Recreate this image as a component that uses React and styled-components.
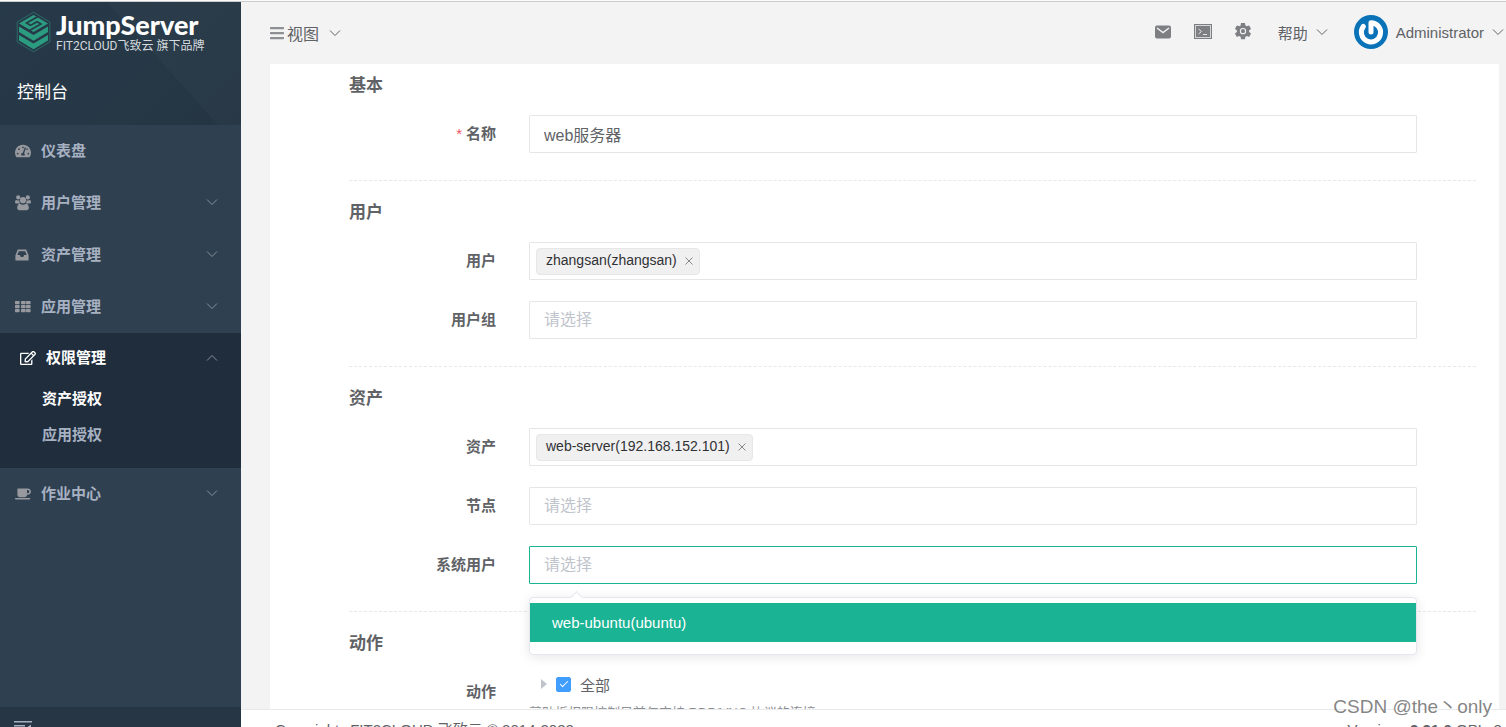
import React, { useState } from 'react';
import styled, { createGlobalStyle, ThemeProvider } from 'styled-components';
import { FaTachometerAlt, FaRegEdit, FaCoffee, FaBars } from 'react-icons/fa';

const theme = {
  colors: {
    green: '#1ab394',
    blue: '#409eff',
    text: '#606266',
    text_dark: '#303133',
    placeholder: '#c0c4cc',
    border: '#e5e6e7',
    menu: '#a7b1c2',
    sidebar: '#2f4050',
    sidebar_dark: '#1f2d3d',
    page: '#f3f3f4',
  },
};

const GlobalStyle = createGlobalStyle`
  *, *::before, *::after {
    box-sizing: border-box;
  }

  body {
    background: ${theme.colors.page};
    color: ${theme.colors.text};
    font-family: 'Liberation Sans', 'Noto Sans CJK SC', sans-serif;
    font-size: 15px;
    margin: 0;
  }

  button,
  input {
    font-family: inherit;
  }

  button {
    background: none;
    border: 0;
    color: inherit;
    cursor: pointer;
    padding: 0;
  }

  a {
    color: inherit;
    text-decoration: none;
  }
`;

const Page = styled.div`
  border-top: 1px solid #fbfbfb;
  display: flex;
  height: 100vh;
  overflow: hidden;
  position: relative;
`;

/* Sidebar */

const Sidebar = styled.aside`
  background: ${props => props.theme.colors.sidebar};
  border-top: 1px solid #c9cbcd;
  display: flex;
  flex: 0 0 241px;
  flex-direction: column;
`;

const SidebarHeader = styled.div`
  background: linear-gradient(48deg, transparent 62%, rgba(255, 255, 255, 0.02) 62%),
    linear-gradient(135deg, #273a49 0%, #263746 60%, #243443 100%);
  height: 123px;
`;

const Brand = styled.a`
  align-items: flex-start;
  color: #fff;
  display: flex;
  gap: 5px;
  padding: 9px 0 0 16px;
`;

const BrandText = styled.span`
  display: flex;
  flex-direction: column;

  strong {
    font-family: Lato, 'Open Sans', sans-serif;
    font-size: 27px;
    font-weight: 900;
    line-height: 28px;
  }

  span {
    color: #d5dade;
    font-family: Roboto, 'Noto Sans CJK SC', sans-serif;
    font-size: 12px;
    line-height: 14px;
    white-space: pre;
  }
`;

const ViewTitle = styled.h1`
  color: #fff;
  font-size: 17px;
  font-weight: 400;
  line-height: 24px;
  margin: 28px 0 0 17px;
`;

const Menu = styled.nav`
  flex: 1;
`;

const MenuItem = styled.button`
  align-items: center;
  color: ${props => (props.$active ? '#fff' : props.theme.colors.menu)};
  display: flex;
  font-size: 15px;
  font-weight: 600;
  gap: 10px;
  height: ${props => (props.$active ? 48 : 52)}px;
  padding: 0 23px ${props => (props.$active ? 1 : 4)}px ${props => (props.$active ? 20 : 15)}px;
  width: 100%;

  > svg:first-child {
    color: ${props => (props.$active ? '#fff' : '#97999e')};
    margin-top: 3px;
  }

  > svg:last-child {
    color: #87919b;
    margin-top: 2px;
  }

  span {
    flex: 1;
    text-align: left;
  }
`;

const MenuGroup = styled.div`
  background: ${props => props.theme.colors.sidebar_dark};
  padding-bottom: 15px;
`;

const SubItem = styled.a`
  color: ${props => (props.$active ? '#fff' : props.theme.colors.menu)};
  display: block;
  font-weight: 600;
  line-height: 36px;
  padding-left: 42px;
`;

const SidebarFooter = styled.div`
  background: #263645;
  flex: 0 0 20px;
  overflow: hidden;
  padding: 13px 14px 0;

  svg {
    display: block;
  }
`;

/* Main column */

const Main = styled.div`
  border-top: 1px solid #c9cbcd;
  display: flex;
  flex: 1;
  flex-direction: column;
  min-width: 0;
`;

const TopBar = styled.header`
  align-items: center;
  display: flex;
  flex: 0 0 62px;
  justify-content: space-between;
  padding: 0 2px 0 28px;
`;

const ViewButton = styled.button`
  align-items: center;
  display: flex;
  font-size: 16px;
  gap: 2px;

  span {
    margin-right: 8px;
  }
`;

const Tools = styled.div`
  align-items: center;
  color: #7d7f82;
  display: flex;
  gap: 22px;
  padding-bottom: 2px;

  svg {
    display: block;
  }
`;

const TextButton = styled.button`
  align-items: center;
  color: ${props => props.theme.colors.text};
  display: flex;
  font-size: 15px;
  gap: 8px;
  margin-left: 4px;
`;

const Content = styled.main`
  flex: 1;
  min-height: 0;
  overflow: hidden;
  padding: 0 7px 0 29px;
`;

const Card = styled.form`
  background: #fff;
  padding: 0 23px 40px 79px;
`;

const Section = styled.section`
  border-bottom: 1px dashed #e7e8ea;
  padding: ${props => (props.$first ? 9 : 19)}px 0 27px;

  &:last-child {
    border-bottom: 0;
  }

  h2 {
    color: ${props => props.theme.colors.text};
    font-size: 17px;
    font-weight: 700;
    line-height: 26px;
    margin: 0 0 16px;
  }
`;

const FormRow = styled.div`
  display: grid;
  grid-template-columns: 180px 1fr;
  margin-right: 59px;

  & + & {
    margin-top: 21px;
  }
`;

const Label = styled.label`
  font-size: 15px;
  font-weight: 700;
  line-height: 38px;
  padding-right: 33px;
  text-align: right;
`;

const Required = styled.span`
  color: #ed5565;
  font-weight: 400;
  margin-right: 4px;
`;

const Field = styled.div`
  align-items: center;
  background: #fff;
  border: 1px solid ${props => (props.$open ? props.theme.colors.green : props.theme.colors.border)};
  border-radius: 1px;
  display: flex;
  height: 38px;
  min-width: 0;
  padding-left: ${props => (props.$tagged ? 6 : 14)}px;
  position: relative;

  > input {
    background: none;
    border: 0;
    color: ${props => props.theme.colors.text};
    flex: 1;
    font-size: 16px;
    min-width: 0;
    outline: 0;
    padding: 0;
  }

  > input::placeholder {
    color: ${props => props.theme.colors.placeholder};
  }
`;

const Tag = styled.span`
  align-items: center;
  background: #f0f0f1;
  border: 1px solid #e6e7e8;
  border-radius: 4px;
  color: ${props => props.theme.colors.text_dark};
  display: inline-flex;
  font-size: 14px;
  gap: 8px;
  height: 27px;
  padding: 0 6px 2px 9px;

  button {
    color: #86888c;
    display: flex;
    padding-top: 2px;
  }
`;

const Dropdown = styled.ul`
  background: #fff;
  border: 1px solid #e4e7ed;
  border-radius: 4px;
  box-shadow: 0 2px 12px rgba(0, 0, 0, 0.1);
  left: -1px;
  list-style: none;
  margin: 0;
  padding: 5px 0 12px;
  position: absolute;
  right: -1px;
  top: 50px;
  z-index: 2;

  &::before {
    background: #fff;
    border: 1px solid #e4e7ed;
    border-bottom: 0;
    border-right: 0;
    content: '';
    height: 9px;
    left: 42px;
    position: absolute;
    top: -5px;
    transform: rotate(45deg);
    width: 9px;
  }
`;

const Option = styled.li`
  background: ${props => props.theme.colors.green};
  color: #fff;
  font-size: 15px;
  line-height: 39px;
  padding: 0 22px;
  position: relative;
`;

const Tree = styled.div`
  align-items: center;
  display: flex;
  height: 22px;
  padding-left: 12px;

  label {
    align-items: center;
    display: flex;
    font-size: 15px;
    gap: 9px;
  }
`;

const Caret = styled.button`
  border-bottom: 5px solid transparent;
  border-left: 6px solid ${props => props.theme.colors.placeholder};
  border-top: 5px solid transparent;
  margin-right: 9px;
`;

const Checkbox = styled.input`
  appearance: none;
  background: #fff;
  border: 1px solid #dcdfe6;
  border-radius: 2px;
  height: 15px;
  margin: 0;
  position: relative;
  width: 15px;

  &:checked {
    background: ${props => props.theme.colors.blue};
    border-color: ${props => props.theme.colors.blue};
  }

  &:checked::after {
    border: 1px solid #fff;
    border-left: 0;
    border-top: 0;
    content: '';
    height: 8px;
    left: 5px;
    position: absolute;
    top: 1px;
    transform: rotate(45deg);
    width: 4px;
  }
`;

const Help = styled.p`
  color: #8c8e92;
  font-size: 13px;
  line-height: 20px;
  margin: 8px 0 0;
`;

const Footer = styled.footer`
  background: #fff;
  border-top: 1px solid #e7eaec;
  display: flex;
  flex: 0 0 18px;
  justify-content: space-between;
  line-height: 20px;
  overflow: hidden;
  padding: 10px 0 0 34px;
  white-space: nowrap;

  span {
    margin-right: 11px;
  }
`;

const Watermark = styled.div`
  bottom: 7px;
  color: rgba(110, 110, 110, 0.85);
  font-size: 19px;
  line-height: 26px;
  position: absolute;
  right: 14px;
  text-shadow: 1px 1px 0 rgba(255, 255, 255, 0.9);
  z-index: 3;
`;

const Chevron = ({ up }) => (
  <svg width="12" height="12" viewBox="0 0 12 12" fill="none" stroke="currentColor" aria-hidden="true">
    <path d={up ? 'M1 8.5l5-5 5 5' : 'M1 3.5l5 5 5-5'} />
  </svg>
);

const Logo = () => (
  <svg width="35" height="42" viewBox="0 0 35 42" fill="none" aria-hidden="true">
    <path d="M17.5 1.2L33.8 11v20L17.5 40.8 1.2 31V11z" stroke="#2a6b66" strokeWidth="1" />
    <path d="M17.5 4L32 12.4 17.5 21 3 12.4z" fill="#2c9c80" />
    <path
      d="M22 5.500L10.500 12l4 2.400 6.500-3.700 4 2.300L13.500 19.500"
      stroke="#263947"
      strokeWidth="1.600"
    />
    <path d="M3 15.500l14.500 8.600L32 15.500v5.600l-14.500 8.600L3 21.100z" fill="#2c9c80" />
    <path d="M3 24l14.500 8.600L32 24v5.600l-14.500 8.600L3 29.600z" fill="#2c9c80" />
  </svg>
);

const GroupIcon = () => (
  <svg width="16" height="16" viewBox="0 0 16 16" fill="currentColor" aria-hidden="true">
    <circle cx="3.2" cy="2.4" r="2.100" />
    <circle cx="12.8" cy="2.4" r="2.100" />
    <circle cx="8" cy="5.2" r="3.100" />
    <path d="M0 7.300C0 5.700.6 4.900 1.600 4.900c1 .5 1.900.6 2.700.4-.1 1.300.2 2.300.9 3.200H1.500C.6 8.500 0 8.100 0 7.300zM16 7.300c0-1.600-.6-2.400-1.600-2.400-1 .5-1.900.6-2.700.4.1 1.300-.2 2.300-.9 3.200h3.700c.9 0 1.500-.4 1.500-1.200z" />
    <path d="M2.200 13c0-2.700.9-4.300 2.800-4.300.8.6 1.800 1 3 1s2.200-.4 3-1c1.900 0 2.800 1.600 2.800 4.300 0 1.400-.9 2.200-2.200 2.200H4.400c-1.300 0-2.200-.8-2.200-2.200z" />
  </svg>
);

const InboxIcon = () => (
  <svg width="16" height="16" viewBox="0 0 16 16" fill="currentColor" aria-hidden="true">
    <path
      fillRule="evenodd"
      d="M3.200 2.500h7.600c.3 0 .5.200.6.400L13.500 8c.1.200.1.400.1.600v4.300c0 .4-.3.700-.7.700H1.100c-.4 0-.7-.3-.7-.7V8.600c0-.2 0-.4.1-.6l2.100-5.100c.1-.2.3-.4.6-.4zM3.900 4.200L2.300 8.100h2.600l.8 1.800h2.600l.8-1.800h2.600l-1.600-3.900z"
    />
  </svg>
);

const GridIcon = () => (
  <svg width="16" height="16" viewBox="0 0 16 16" fill="currentColor" aria-hidden="true">
    {[2, 6, 10].map(y =>
      [0, 6, 11].map(x => <rect key={`${x}-${y}`} x={x} y={y} width="4.600" height="3.200" rx="0.6" />)
    )}
  </svg>
);

const MailIcon = () => (
  <svg width="18" height="18" viewBox="0 0 18 18" aria-hidden="true">
    <rect x="1" y="2.500" width="16" height="13" rx="2" fill="currentColor" />
    <path d="M3 5l6 4.500L15 5" fill="none" stroke="#f3f3f4" strokeWidth="1.400" />
  </svg>
);

const TerminalIcon = () => (
  <svg width="18" height="18" viewBox="0 0 18 18" aria-hidden="true">
    <rect x="0.5" y="1.5" width="17" height="14" fill="#d5d6d7" stroke="currentColor" />
    <rect x="2" y="3" width="14" height="11" fill="currentColor" />
    <path d="M4.500 6l3 2.500-3 2.500M9 11.500h4" fill="none" stroke="#e4e4e5" />
  </svg>
);

const GearIcon = () => (
  <svg width="18" height="18" viewBox="1 2 22 22" aria-hidden="true">
    <path
      fill="currentColor"
      d="M19.430 12.980c.04-.32.07-.64.07-.98s-.03-.66-.07-.98l2.110-1.650c.19-.15.24-.42.12-.64l-2-3.460c-.12-.22-.39-.3-.61-.22l-2.490 1c-.52-.4-1.080-.73-1.690-.98l-.38-2.650A.49.49 0 0014 2h-4c-.25 0-.46.18-.49.42l-.38 2.650c-.61.25-1.170.59-1.690.98l-2.490-1c-.23-.09-.49 0-.61.22l-2 3.460c-.13.22-.07.49.12.64l2.110 1.650c-.04.32-.07.65-.07.98s.03.66.07.98l-2.110 1.650c-.19.15-.24.42-.12.64l2 3.460c.12.22.39.3.61.22l2.490-1c.52.4 1.080.73 1.690.98l.38 2.650c.03.24.24.42.49.42h4c.25 0 .46-.18.49-.42l.38-2.650c.61-.25 1.170-.59 1.690-.98l2.490 1c.23.09.49 0 .61-.22l2-3.460c.12-.22.07-.49-.12-.64z"
    />
    <circle cx="12" cy="12" r="3.200" fill="none" stroke="#f3f3f4" strokeWidth="1.300" />
  </svg>
);

const Avatar = () => (
  <svg width="34" height="34" viewBox="0 0 34 34" fill="none" aria-hidden="true">
    <circle cx="17" cy="17" r="17" fill="#0a73b8" />
    <path
      d="M17 17V7.700a9.600 9.600 0 1 1-7.600 3.700"
      stroke="#fff"
      strokeWidth="5"
      strokeLinecap="round"
      strokeLinejoin="round"
    />
  </svg>
);

const CloseIcon = () => (
  <svg width="8" height="8" viewBox="0 0 8 8" stroke="currentColor" aria-hidden="true">
    <path d="M.5.5l7 7M7.500.5l-7 7" />
  </svg>
);

const CollapseIcon = () => (
  <svg width="18" height="14" viewBox="0 0 18 14" fill="#a7b1c2" aria-hidden="true">
    <path d="M0 1h18v1.500H0zM0 5h11v1.500H0zM0 9h11v1.500H0zM0 13h18v1H0zM17 4.500v5L13.500 7z" />
  </svg>
);

const topMenu = [
  { text: '仪表盘', icon: FaTachometerAlt, leaf: true },
  { text: '用户管理', icon: GroupIcon },
  { text: '资产管理', icon: InboxIcon },
  { text: '应用管理', icon: GridIcon },
];

const MenuEntry = ({ item }) => {
  const Icon = item.icon;
  return (
    <MenuItem type="button">
      <Icon size={16} />
      <span>{item.text}</span>
      {!item.leaf && <Chevron />}
    </MenuItem>
  );
};

const SelectRow = ({ id, label, initial = [], options }) => {
  const [tags, setTags] = useState(initial);
  const tagged = tags.length > 0;

  return (
    <FormRow>
      <Label htmlFor={id}>{label}</Label>
      <Field $tagged={tagged} $open={!!options}>
        {tags.map(tag => (
          <Tag key={tag}>
            {tag}
            <button
              type="button"
              aria-label={`移除 ${tag}`}
              onClick={() => setTags(tags.filter(t => t !== tag))}
            >
              <CloseIcon />
            </button>
          </Tag>
        ))}
        <input id={id} type="text" autoComplete="off" placeholder={tagged ? '' : '请选择'} />
        {options && (
          <Dropdown role="listbox" aria-label={label}>
            {options.map(option => (
              <Option key={option} role="option" aria-selected="true">
                {option}
              </Option>
            ))}
          </Dropdown>
        )}
      </Field>
    </FormRow>
  );
};

const App = () => (
  <ThemeProvider theme={theme}>
    <GlobalStyle />
    <Page>
      <Sidebar>
        <SidebarHeader>
          <Brand href="#">
            <Logo />
            <BrandText>
              <strong>JumpServer</strong>
              <span>FIT2CLOUD飞致云 旗下品牌</span>
            </BrandText>
          </Brand>
          <ViewTitle>控制台</ViewTitle>
        </SidebarHeader>
        <Menu>
          {topMenu.map(item => (
            <MenuEntry key={item.text} item={item} />
          ))}
          <MenuGroup>
            <MenuItem type="button" $active>
              <FaRegEdit size={16} />
              <span>权限管理</span>
              <Chevron up />
            </MenuItem>
            <SubItem href="#" $active>
              资产授权
            </SubItem>
            <SubItem href="#">应用授权</SubItem>
          </MenuGroup>
          <MenuEntry item={{ text: '作业中心', icon: FaCoffee }} />
        </Menu>
        <SidebarFooter>
          <CollapseIcon />
        </SidebarFooter>
      </Sidebar>

      <Main>
        <TopBar>
          <ViewButton type="button">
            <FaBars size={16} color="#8d8f94" />
            <span>视图</span>
            <Chevron />
          </ViewButton>
          <Tools>
            <button type="button" aria-label="站内信">
              <MailIcon />
            </button>
            <button type="button" aria-label="终端">
              <TerminalIcon />
            </button>
            <button type="button" aria-label="设置">
              <GearIcon />
            </button>
            <TextButton type="button">
              帮助
              <Chevron />
            </TextButton>
            <TextButton type="button">
              <Avatar />
              Administrator
              <Chevron />
            </TextButton>
          </Tools>
        </TopBar>

        <Content>
          <Card>
            <Section $first>
              <h2>基本</h2>
              <FormRow>
                <Label htmlFor="name">
                  <Required>*</Required>
                  名称
                </Label>
                <Field>
                  <input id="name" type="text" defaultValue="web服务器" />
                </Field>
              </FormRow>
            </Section>
            <Section>
              <h2>用户</h2>
              <SelectRow id="users" label="用户" initial={['zhangsan(zhangsan)']} />
              <SelectRow id="user-groups" label="用户组" />
            </Section>
            <Section>
              <h2>资产</h2>
              <SelectRow id="assets" label="资产" initial={['web-server(192.168.152.101)']} />
              <SelectRow id="nodes" label="节点" />
              <SelectRow id="system-users" label="系统用户" options={['web-ubuntu(ubuntu)']} />
            </Section>
            <Section>
              <h2>动作</h2>
              <FormRow>
                <Label htmlFor="actions">动作</Label>
                <div>
                  <Tree>
                    <Caret type="button" aria-label="展开" />
                    <label>
                      <Checkbox id="actions" type="checkbox" defaultChecked />
                      全部
                    </label>
                  </Tree>
                  <Help>剪贴板权限控制目前仅支持 RDP/VNC 协议的连接</Help>
                </div>
              </FormRow>
            </Section>
          </Card>
        </Content>

        <Footer>
          <div>
            <span>Copyright</span>
            FIT2CLOUD 飞致云 © 2014-2022
          </div>
          <div>
            Version <strong>v2.21.0</strong> GPLv3.
          </div>
        </Footer>
      </Main>
      <Watermark>CSDN @the丶only</Watermark>
    </Page>
  </ThemeProvider>
);

export default App;
